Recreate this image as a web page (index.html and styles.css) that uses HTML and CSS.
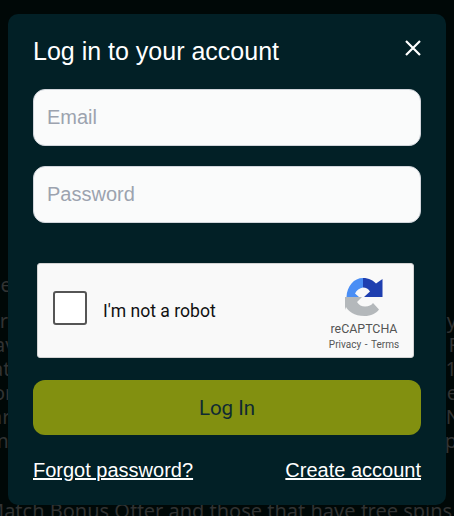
FILE: index.html
```html
<!DOCTYPE html>
<html lang="en">
<head>
<meta charset="utf-8">
<title>Log in</title>
<link rel="stylesheet" href="styles.css">
</head>
<body>
<main class="article" aria-hidden="true">
  <p class="line l1"><span>The</span><span></span></p>
  <p class="line l2"><span>Ar</span><span>y</span></p>
  <p class="line l3"><span>Pav</span><span>F</span></p>
  <p class="line l4"><span>at</span><span>21</span></p>
  <p class="line l5"><span>or</span><span>e</span></p>
  <p class="line l6"><span>ar</span><span>N</span></p>
  <p class="line l7"><span>m</span><span>p</span></p>
  <p class="line l8">Match Bonus Offer and those that have free spins</p>
</main>
<section class="modal">
  <header class="modal-head">
    <h1 class="title">Log in to your account</h1>
    <button class="close" type="button" aria-label="Close">
      <svg viewBox="0 0 16 16" width="16" height="16"><path d="M1 1L15 15M15 1L1 15" stroke="#fff" stroke-width="2.2" fill="none"/></svg>
    </button>
  </header>
  <form class="form">
    <input class="field" type="email" placeholder="Email">
    <input class="field" type="password" placeholder="Password">
    <div class="captcha">
      <span class="check"></span>
      <span class="robot">I'm not a robot</span>
      <div class="brand">
        <svg class="logo" viewBox="0 0 38 38" width="38" height="38">
          <path d="M18 0C24 0 28.500 2.500 31 5.500L37.500 1V19H19L25 13.500C23.500 11 21 9.500 18 9.500Z" fill="#1f3fb0"/>
          <path d="M18 0V9.500C14.500 10 11.500 12 10 15.500L14 19H1.500C2 8 9 0 18 0Z" fill="#4a8ef5"/>
          <path d="M0 19H17L12 24C14 27 16.500 28.500 20 28.500C24 28.500 26.500 27 28 25L34 31.500C31 35.500 26 38 19.500 38C9 38 3 33 1 29L0 32Z" fill="#b4b8bb"/>
        </svg>
        <span class="brand-name">reCAPTCHA</span>
        <span class="brand-links">Privacy - Terms</span>
      </div>
    </div>
    <button class="submit" type="button">Log In</button>
  </form>
  <footer class="links">
    <a href="#">Forgot password?</a>
    <a href="#">Create account</a>
  </footer>
</section>
</body>
</html>
```
FILE: styles.css
```css
* { box-sizing: border-box; }
html, body { margin: 0; height: 516px; overflow: hidden; }
body {
  position: relative;
  background: #000807;
  font-family: "Liberation Sans", Arial, sans-serif;
}
.article {
  height: 516px;
  display: flex;
  flex-direction: column;
  font-family: "Noto Sans", sans-serif;
  font-size: 20px;
  line-height: 24px;
  color: #313333;
}
.line {
  margin: 0;
  display: flex;
  justify-content: space-between;
  white-space: nowrap;
  height: 24px;
}
.l1 { margin-top: 273px; margin-left: -23px; }
.l2 { margin-top: 12px; margin-left: -13px; margin-right: -3px; }
.l3 { margin-left: -18px; margin-right: -5px; }
.l4 { margin-left: -8px; margin-right: -3px; }
.l5 { margin-left: -7px; margin-right: -4px; }
.l6 { margin-left: -9px; margin-right: -7px; }
.l7 { margin-left: -10px; margin-right: -3px; }
.l8 { margin-top: 46px; margin-left: -14px; }
.modal {
  position: absolute;
  left: 8px;
  top: 14px;
  width: 438px;
  height: 491px;
  padding: 0 25px;
  background: #022026;
  border-radius: 10px;
  color: #fff;
}
.modal-head {
  height: 75px;
  display: flex;
  align-items: center;
  justify-content: space-between;
  padding-bottom: 1px;
}
.title {
  margin: 0;
  font-size: 25px;
  line-height: 32px;
  font-weight: 400;
}
.close {
  padding: 0;
  border: 0;
  background: none;
  display: flex;
  margin: 0 0 7px 0;
}
.form { display: flex; flex-direction: column; }
.field {
  height: 57px;
  margin-bottom: 20px;
  padding: 0 13px;
  background: #fafbfb;
  border: 1px solid #d1d5db;
  border-radius: 12px;
  font: 20px "Liberation Sans", Arial, sans-serif;
}
.field::placeholder { color: #9ca3af; opacity: 1; }
.captcha {
  align-self: flex-start;
  width: 377px;
  height: 95px;
  margin: 20px 0 22px 4px;
  display: flex;
  background: #f9f9f9;
  border: 1px solid #d3d3d3;
  border-radius: 3px;
  color: #111;
}
.check {
  width: 34px;
  height: 34px;
  margin: 27px 0 0 15px;
  background: #fff;
  border: 2px solid #555;
  border-radius: 3px;
}
.robot {
  margin: 35px 0 0 16px;
  font: 17.6px/24px Roboto, sans-serif;
}
.brand {
  margin-left: auto;
  width: 70px;
  margin-right: 14px;
  display: flex;
  flex-direction: column;
  align-items: center;
  white-space: nowrap;
  color: #555;
}
.logo { margin-top: 14px; }
.brand-name { margin-top: 5px; font: 12.4px/16px Roboto, sans-serif; }
.brand-links { margin-top: 1px; font: 10px/14px Roboto, sans-serif; word-spacing: 1.2px; }
.submit {
  height: 55px;
  padding: 0;
  border: 0;
  border-radius: 12px;
  background: #829010;
  color: #0f2a33;
  font: 20.5px Roboto, sans-serif;
}
.links {
  margin-top: 22px;
  display: flex;
  justify-content: space-between;
  font-size: 20px;
  line-height: 26px;
}
.links a { color: #fff; }
```
